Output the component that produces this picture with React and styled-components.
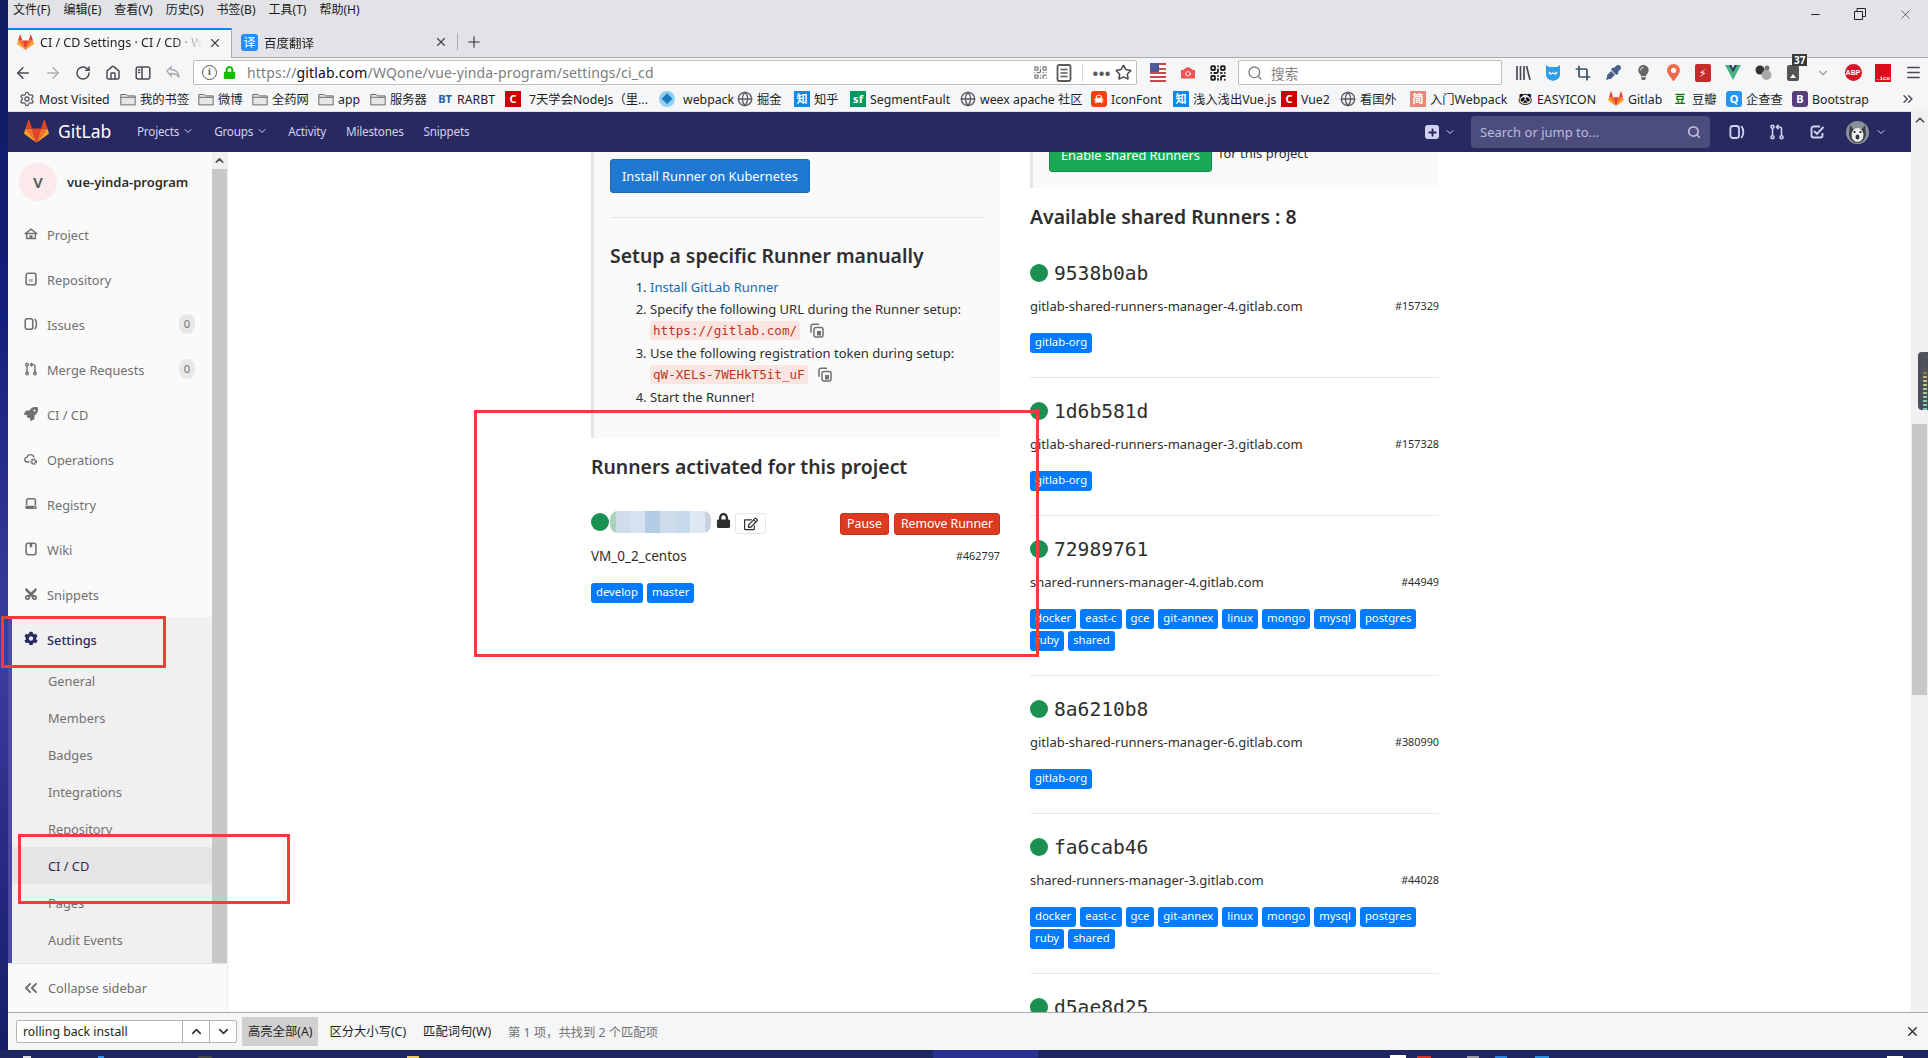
import styled, { createGlobalStyle } from "styled-components";
import {
  ArrowLeft, ArrowRight, RotateCw, Home, Globe, ChevronDown, ChevronUp, ChevronsRight, ChevronsLeft,
  Search, X, Plus, Star, Minus, Menu, Crop, Camera, QrCode, Settings as Gear,
} from "lucide-react";
import { FaCog, FaLock, FaRegEdit, FaRocket, FaCut, FaMapMarkerAlt, FaEyeDropper, FaLightbulb } from "react-icons/fa";

const GlobalStyle = createGlobalStyle`
  html, body { margin: 0; padding: 0; width: 1928px; height: 1058px; overflow: hidden; background: #fff; }
  body { font-family: "Noto Sans", "Noto Sans CJK SC", sans-serif; color: #2e2e2e; font-size: 13px; }
  * { box-sizing: border-box; }
`;

function Tanuki({ size = 24 }) {
  return (
    <svg width={size} height={size} viewBox="0 0 36 36">
      <path fill="#E24329" d="M18 34.1L24.6 13.8H11.4z" />
      <path fill="#FC6D26" d="M18 34.1L11.4 13.8H2.2z" />
      <path fill="#FCA326" d="M2.2 13.8L.2 20c-.2.6 0 1.200.5 1.500L18 34.100z" />
      <path fill="#E24329" d="M2.2 13.8h9.2L7.400 1.500c-.2-.6-1.100-.6-1.300 0z" />
      <path fill="#FC6D26" d="M18 34.1L24.6 13.8h9.200z" />
      <path fill="#FCA326" d="M33.800 13.800L35.800 20c.2.6 0 1.200-.5 1.500L18 34.100z" />
      <path fill="#E24329" d="M33.800 13.800h-9.200l4-12.300c.2-.6 1.100-.6 1.300 0z" />
    </svg>
  );
}

function IssuesIcon({ color = "#707070", size = 16 }) {
  return (
    <svg width={size} height={size} viewBox="0 0 16 16" fill="none" stroke={color} strokeWidth="1.8">
      <rect x="1.400" y="2" width="8.600" height="12" rx="2.400" />
      <path d="M12.600 2.600c2.300 2.600 2.300 8.200 0 10.800" strokeLinecap="round" />
    </svg>
  );
}
function MergeIcon({ color = "#707070", size = 16 }) {
  return (
    <svg width={size} height={size} viewBox="0 0 16 16" fill="none" stroke={color} strokeWidth="1.600">
      <circle cx="3.500" cy="2.800" r="1.500" />
      <circle cx="3.500" cy="13.200" r="1.500" />
      <circle cx="12.500" cy="13.200" r="1.500" />
      <path d="M3.500 4.500v7M12.500 11.500V5c0-1.200-.8-2-2-2H8" />
      <path d="M9.500 .8L7.500 3l2 2.200" />
    </svg>
  );
}
function TodoIcon({ color = "#fff", size = 16 }) {
  return (
    <svg width={size} height={size} viewBox="0 0 16 16" fill="none" stroke={color} strokeWidth="1.900">
      <path d="M13.500 9v2.500a2 2 0 0 1-2 2h-7a2 2 0 0 1-2-2v-7a2 2 0 0 1 2-2H11" />
      <path d="M5.500 7.500L8 10l6-6.500" strokeLinecap="round" />
    </svg>
  );
}
function ProjectIcon() {
  return (
    <svg width="16" height="16" viewBox="0 0 16 16" fill="#707070">
      <path d="M8 1.500L15.500 7v1.200H13.800V14H2.200V8.200H.5V7zM8 3.600L3.800 6.700h8.400zM3.900 8.200v4.200h2.300V9.500h3.600v2.900h2.300V8.200z" />
    </svg>
  );
}
function RepoIcon() {
  return (
    <svg width="16" height="16" viewBox="0 0 16 16" fill="none" stroke="#707070" strokeWidth="1.800">
      <rect x="2.400" y="1.400" width="11.200" height="13.200" rx="2.400" />
      <rect x="5.500" y="8" width="4.500" height="3.500" fill="#b5b5b5" stroke="none" />
    </svg>
  );
}
function OperationsIcon() {
  return (
    <svg width="16" height="16" viewBox="0 0 16 16" fill="none" stroke="#707070" strokeWidth="1.600">
      <path d="M6 11.500H3.600C2 11.500.9 10.300.9 8.800c0-1.400 1-2.500 2.400-2.700C3.800 4.200 5.400 3 7.200 3c2 0 3.600 1.300 4.100 3.100" />
      <circle cx="11" cy="11" r="2.600" strokeWidth="2.400" strokeDasharray="1.600 .6" />
    </svg>
  );
}
function RegistryIcon() {
  return (
    <svg width="16" height="16" viewBox="0 0 16 16" fill="none" stroke="#707070" strokeWidth="1.800">
      <path d="M3 9.500V4a2 2 0 0 1 2-2h6a2 2 0 0 1 2 2v5.500" />
      <rect x="1.500" y="10" width="13" height="3.600" rx="1.400" fill="#707070" stroke="none" />
      <circle cx="11.800" cy="11.800" r=".8" fill="#fff" stroke="none" />
    </svg>
  );
}
function WikiIcon() {
  return (
    <svg width="16" height="16" viewBox="0 0 16 16" fill="none" stroke="#707070" strokeWidth="1.800">
      <rect x="2.400" y="1.400" width="11.200" height="13.200" rx="2.200" />
      <path d="M6.500 1.500h3v5l-1.500-1-1.500 1z" fill="#707070" stroke="none" />
    </svg>
  );
}
function CopyIcon() {
  return (
    <svg width="14" height="15" viewBox="0 0 14 15" fill="none" stroke="#707070" strokeWidth="1.500">
      <path d="M8.500 1.200H3a2 2 0 0 0-2 2v6" strokeLinecap="round" />
      <rect x="4" y="4.500" width="9" height="9.500" rx="2" fill="#fafafa" />
      <rect x="7" y="8" width="4" height="4.500" fill="#707070" stroke="none" />
    </svg>
  );
}
function FolderIcon() {
  return (
    <svg width="16" height="16" viewBox="0 0 16 16" fill="#e6e6e6" stroke="#6d6d6d" strokeWidth="1">
      <path d="M.8 3.500h5.400l1.300 1.400h7.700v9H.8z" />
      <path d="M.8 6.300h14.400" />
    </svg>
  );
}
function SidebarToggleIcon() {
  return (
    <svg width="16" height="16" viewBox="0 0 16 16" fill="none" stroke="#4a4a4f" strokeWidth="1.500">
      <rect x="1.200" y="2" width="13.600" height="12" rx="2" />
      <path d="M7 2v12" />
      <path d="M3 5h2.400M3 7.500h2.400" />
    </svg>
  );
}
function UndoIcon() {
  return (
    <svg width="16" height="16" viewBox="0 0 16 16" fill="none" stroke="#a8a8ac" strokeWidth="1.400">
      <path d="M2 6l4-4v2.500c4 0 8 2.500 8 8-1.500-3-4-4-8-4V11z" />
    </svg>
  );
}
function ReaderIcon() {
  return (
    <svg width="16" height="18" viewBox="0 0 16 18" fill="none" stroke="#5a5a5f" strokeWidth="1.800">
      <rect x="1.500" y="1" width="13" height="16" rx="1.500" />
      <path d="M4.500 5.500h7M4.500 9h7M4.500 12.500h7" strokeWidth="1.300" />
    </svg>
  );
}
function FlagIcon() {
  return (
    <svg width="16" height="19" viewBox="0 0 16 19">
      <rect width="16" height="19" fill="#fff" />
      <path d="M0 0h16v2H0zM0 5h16v2H0zM0 9h16v2H0zM0 13h16v2H0zM0 17h16v2H0z" fill="#c8494d" />
      <rect width="9" height="9" fill="#4e5b94" />
    </svg>
  );
}
function LibraryIcon() {
  return (
    <svg width="16" height="16" viewBox="0 0 16 16" fill="none" stroke="#4a4a4f" strokeWidth="1.700">
      <path d="M2 1v14M5.500 1v14M9 1v14M11.500 1l3.500 14" />
    </svg>
  );
}
function BatIcon() {
  return (
    <svg width="16" height="18" viewBox="0 0 16 18">
      <path d="M1 1l3 2h8l3-2v10c0 3-3 5-7 6-4-1-7-3-7-6z" fill="#2e9fe6" />
      <path d="M4 8l1.500 2L8 9l2.500 1L12 8" stroke="#fff" strokeWidth="1.300" fill="none" />
    </svg>
  );
}
function VueIcon() {
  return (
    <svg width="16" height="15" viewBox="0 0 16 15">
      <path d="M0 0h3.500L8 8l4.500-8H16L8 15z" fill="#41b883" />
      <path d="M3.500 0h3L8 3l1.500-3h3L8 8z" fill="#35495e" />
    </svg>
  );
}
function BallsIcon() {
  return (
    <svg width="17" height="16" viewBox="0 0 17 16">
      <circle cx="5" cy="5" r="4.500" fill="#333" />
      <circle cx="11.500" cy="10" r="5" fill="#aaa" />
      <circle cx="12" cy="3" r="2.500" fill="#777" />
    </svg>
  );
}
function HuskyAvatar() {
  return (
    <svg width="23" height="23" viewBox="0 0 23 23">
      <circle cx="11.500" cy="11.500" r="11.500" fill="#8a9099" />
      <path d="M4 4l3 4h9l3-4 1 10c-1 5-5 8-8.500 8S4 19 3 14z" fill="#3c3f44" />
      <ellipse cx="11.500" cy="14" rx="6" ry="7" fill="#f0f0f0" />
      <circle cx="8.500" cy="11" r="1.100" fill="#111" />
      <circle cx="14.500" cy="11" r="1.100" fill="#111" />
      <ellipse cx="11.500" cy="16" rx="2" ry="2.600" fill="#333" />
    </svg>
  );
}

const App_ = styled.div`
  position: relative;
  width: 1928px;
  height: 1058px;
  overflow: hidden;
  display: flex;
  flex-direction: column;
`;
const Workspace = styled.div`
  flex: 1;
  min-height: 0;
  display: flex;
`;
const DesktopEdge = styled.div`
  width: 8px;
  background: linear-gradient(180deg, #101c5e 0%, #131f7c 30%, #3d3f9c 62%, #2a2a86 80%, #141f66 100%);
`;
const Browser = styled.div`
  flex: 1;
  min-width: 0;
  display: flex;
  flex-direction: column;
`;

const MenuBar = styled.div`
  height: 28px;
  background: #e1e3e6;
  display: flex;
  align-items: flex-start;
  padding: 1px 0 0 5px;
  gap: 13px;
  font-size: 12px;
  line-height: 17px;
  color: #1a1a1a;
`;
const WindowButtons = styled.div`
  margin-left: auto;
  display: flex;
  align-items: center;
  gap: 32px;
  height: 26px;
  padding-right: 15px;
  color: #222;
`;
const TabStrip = styled.div`
  height: 30px;
  background: #e1e3e6;
  border-bottom: 1px solid #a9abae;
  display: flex;
  align-items: stretch;
`;
const Tab = styled.div`
  width: ${(p) => p.$w}px;
  height: ${(p) => (p.$active ? 30 : 29)}px;
  display: flex;
  align-items: center;
  padding: 0 9px 3px;
  gap: 6px;
  font-size: 12.500px;
  color: #222;
  background: ${(p) => (p.$active ? "#f5f6f7" : "transparent")};
  border-top: ${(p) => (p.$active ? "2px solid #0a84ff" : "2px solid transparent")};
  border-right: ${(p) => (p.$active ? "1px solid #a9abae" : "none")};
`;
const TabTitle = styled.span`
  flex: 1;
  min-width: 0;
  white-space: nowrap;
  overflow: hidden;
  -webkit-mask-image: linear-gradient(90deg, #000 82%, transparent 100%);
  mask-image: linear-gradient(90deg, #000 82%, transparent 100%);
`;
const TranslateLogo = styled.span`
  width: 17px;
  height: 17px;
  border-radius: 3px;
  background: #2a8cf6;
  color: #fff;
  font-size: 12px;
  line-height: 17px;
  text-align: center;
  flex: none;
`;
const NewTab = styled.div`
  width: 32px;
  display: flex;
  align-items: center;
  justify-content: center;
  color: #333;
  border-left: 1px solid #a9abae;
  margin: 5px 0 7px;
`;

const Toolbar = styled.div`
  height: 29px;
  background: #f5f6f7;
  display: flex;
  align-items: center;
`;
const ToolButton = styled.div`
  width: 30px;
  height: 24px;
  flex: none;
  display: flex;
  align-items: center;
  justify-content: center;
  position: relative;
`;
const UrlBox = styled.div`
  width: ${(p) => p.$w}px;
  margin: 0 6px 0 5px;
  height: 25px;
  flex: none;
  background: #fff;
  border: 1px solid #bdbdbd;
  border-radius: 2px;
  display: flex;
  align-items: center;
  font-size: 14px;
  letter-spacing: 0.160px;
  color: #7d7d7d;
  padding-left: 8px;
`;
const UrlHost = styled.span`
  color: #0c0c0d;
`;
const UrlText = styled.span`
  margin-left: 11px;
  white-space: nowrap;
`;
const InfoIcon = styled.span`
  width: 15px;
  height: 15px;
  border: 1.500px solid #555;
  border-radius: 50%;
  font: 700 10px/12px "Liberation Serif", serif;
  text-align: center;
  color: #555;
  flex: none;
`;
const UrlTools = styled.div`
  margin-left: auto;
  display: flex;
  align-items: center;
  gap: 8px;
  padding-right: 4px;
  color: #5a5a5f;
`;
const UrlDivider = styled.div`
  width: 1px;
  height: 18px;
  background: #dcdcdc;
  margin: 0 2px;
`;
const MoreDots = styled.span`
  font-size: 15px;
  letter-spacing: 0.500px;
  font-weight: 700;
  line-height: 12px;
  margin-right: -4px;
`;
const SearchPlaceholder = styled.span`
  color: #808080;
  margin-left: 8px;
  font-size: 13.500px;
`;
const CountBadge = styled.span`
  position: absolute;
  top: -7px;
  left: 14px;
  background: #3a3a3a;
  color: #fff;
  font: 700 10px/12px "Noto Sans", sans-serif;
  padding: 0 2px;
`;
const RedSquare = styled.div`
  width: 16px;
  height: 18px;
  background: #df0a1a;
  color: #fff;
  font: 700 6px/6px "Liberation Mono", monospace;
  display: flex;
  align-items: flex-end;
  justify-content: center;
`;
const AbpBadge = styled.div`
  width: 17px;
  height: 17px;
  border-radius: 50%;
  background: #d8142a;
  color: #fff;
  font: 700 7px/17px "Liberation Sans", sans-serif;
  text-align: center;
`;
const WandBox = styled.div`
  width: 16px;
  height: 18px;
  background: #c72a2a;
  border-radius: 2px;
  color: #fff;
  font-size: 11px;
  line-height: 18px;
  text-align: center;
`;

const BookmarkBar = styled.div`
  height: 25px;
  background: #f5f6f7;
  border-bottom: 1px solid #e0e0e2;
  display: flex;
  align-items: center;
  padding-left: 11px;
  gap: 10px;
  font-size: 12.300px;
  color: #1e1e1e;
`;
const Bookmark = styled.div`
  display: flex;
  align-items: center;
  gap: 4px;
  flex: none;
  white-space: nowrap;
`;
const BookmarkLabel = styled.span`
  width: ${(p) => p.$w}px;
  padding-left: ${(p) => p.$pad || 0}px;
  white-space: nowrap;
`;
const Favicon = styled.span`
  width: 16px;
  height: 16px;
  flex: none;
  display: flex;
  align-items: center;
  justify-content: center;
  background: ${(p) => p.$bg || "transparent"};
  color: ${(p) => p.$color || "#fff"};
  font-size: 11px;
  font-weight: 700;
  line-height: 16px;
  border-radius: ${(p) => p.$round || 0}px;
`;

const GitlabNav = styled.nav`
  height: 40px;
  width: 1903px;
  background: #292961;
  display: flex;
  align-items: center;
  padding-left: 16px;
  color: #d1d1f0;
  font-size: 11.700px;
  letter-spacing: -0.200px;
  flex: none;
`;
const Brand = styled.div`
  display: flex;
  align-items: center;
  gap: 9px;
  width: 113px;
  color: #fff;
  font-size: 17.500px;
  letter-spacing: 0;
  padding-bottom: 2px;
`;
const NavLinks = styled.div`
  display: flex;
  align-items: center;
  gap: 20px;
  padding-bottom: 2px;
`;
const NavLink = styled.span`
  display: flex;
  align-items: center;
  gap: 3px;
`;
const NavRight = styled.div`
  margin-left: auto;
  display: flex;
  align-items: center;
  padding-right: 24px;
`;
const PlusBox = styled.span`
  width: 14px;
  height: 14px;
  border-radius: 3px;
  background: #d1d1f0;
  color: #292961;
  display: flex;
  align-items: center;
  justify-content: center;
`;
const NavSearch = styled.div`
  width: 239px;
  height: 32px;
  border-radius: 4px;
  background: #4d4d7d;
  color: #bcbcdc;
  display: flex;
  align-items: center;
  justify-content: space-between;
  padding: 0 9px;
  margin: 0 19px 0 15px;
  font-size: 13px;
  letter-spacing: 0;
`;
const NavIcons = styled.div`
  display: flex;
  align-items: center;
  gap: 24px;
  margin-right: 21px;
`;
const AvatarWrap = styled.div`
  display: flex;
  align-items: center;
  gap: 6px;
`;

const PageRow = styled.div`
  flex: 1;
  min-height: 0;
  display: flex;
`;
const Sidebar = styled.aside`
  width: 220px;
  flex: none;
  display: flex;
  flex-direction: column;
  background: #fafafa;
  border-right: 1px solid #ececec;
`;
const SideScrollArea = styled.div`
  flex: 1;
  min-height: 0;
  display: flex;
`;
const SideNav = styled.div`
  flex: 1;
  min-width: 0;
  display: flex;
  flex-direction: column;
`;
const SideScrollbar = styled.div`
  width: 15px;
  background: #c8c8c8;
  flex: none;
`;
const ScrollArrow = styled.div`
  height: 17px;
  background: #f0f0f0;
  display: flex;
  align-items: center;
  justify-content: center;
  color: #505050;
`;
const ContextHeader = styled.div`
  height: 60px;
  display: flex;
  align-items: center;
  padding: 0 0 0 11px;
  gap: 10px;
  font-size: 13px;
  font-weight: 600;
  color: #2e2e2e;
`;
const ProjectAvatar = styled.div`
  width: 38px;
  height: 38px;
  border-radius: 50%;
  background: #fbe9eb;
  color: #555;
  font-size: 15px;
  font-weight: 600;
  display: flex;
  align-items: center;
  justify-content: center;
`;
const SideItem = styled.div`
  height: 45px;
  display: flex;
  align-items: center;
  padding: 0 17px 0 16px;
  gap: 9px;
  font-size: 12.800px;
  color: #707070;
`;
const ItemIcon = styled.span`
  width: 14px;
  display: flex;
  align-items: center;
  justify-content: center;
  flex: none;
  margin-top: -2px;
  color: #707070;
`;
const CountPill = styled.span`
  margin-left: auto;
  width: 16px;
  height: 20px;
  margin-top: -2px;
  border-radius: 8px;
  background: #e8e8e8;
  color: #707070;
  font-size: 11px;
  line-height: 20px;
  text-align: center;
`;
const SettingsGroup = styled.div`
  flex: 1;
  background: #f0f0f0;
  border-left: 4px solid #4b4ba3;
`;
const SettingsHead = styled.div`
  height: 45px;
  display: flex;
  align-items: center;
  padding-left: 12px;
  gap: 9px;
  font-size: 12.800px;
  font-weight: 500;
  color: #292961;
`;
const SubItem = styled.div`
  height: 37px;
  display: flex;
  align-items: center;
  padding-left: 36px;
  font-size: 12.800px;
  color: ${(p) => (p.$active ? "#292961" : "#707070")};
  background: ${(p) => (p.$active ? "#e5e5e5" : "transparent")};
`;
const CollapseRow = styled.div`
  height: 49px;
  flex: none;
  display: flex;
  align-items: center;
  padding-left: 13px;
  gap: 7px;
  border-top: 1px solid #e5e5e5;
  font-size: 12.800px;
  color: #707070;
`;

const Main = styled.main`
  flex: 1;
  min-width: 0;
  overflow: hidden;
`;
const Columns = styled.div`
  display: grid;
  grid-template-columns: 409px 409px;
  column-gap: 30px;
  padding-left: 363px;
  align-items: start;
`;
const Column = styled.div`
  min-width: 0;
`;
const GrayPanel = styled.div`
  background: #fafafa;
  border-left: 3px solid #e5e5e5;
  padding: ${(p) => p.$pad};
  margin-top: ${(p) => p.$top || 0}px;
`;
const PrimaryButton = styled.div`
  display: inline-block;
  height: 34px;
  padding: 0 11px;
  line-height: 32px;
  background: ${(p) => (p.$green ? "#1aaa55" : "#1f78d1")};
  border: 1px solid ${(p) => (p.$green ? "#168f48" : "#1b69b6")};
  color: #fff;
  border-radius: 3px;
  font-size: 12.800px;
`;
const EnableRow = styled.div`
  display: flex;
  align-items: flex-start;
  gap: 7px;
  font-size: 13px;
`;
const ProjectSuffix = styled.span`
  line-height: 30px;
`;
const Rule = styled.div`
  height: 1px;
  background: #e5e5e5;
  margin-top: 24px;
`;
const Heading = styled.h4`
  margin: ${(p) => p.$m};
  font-size: 19.400px;
  line-height: 28px;
  font-weight: 600;
  color: #2e2e2e;
  white-space: nowrap;
`;
const Steps = styled.ol`
  margin: 6px 0 0;
  padding: 0 0 0 40px;
  font-size: 13px;
  line-height: 22px;
`;
const StepLink = styled.span`
  color: #1b69b6;
`;
const CodeRow = styled.div`
  display: flex;
  align-items: center;
  gap: 10px;
  height: 21px;
  margin-bottom: 1px;
`;
const Code = styled.code`
  background: #fbe5e1;
  color: #c0341d;
  font-family: "DejaVu Sans Mono", monospace;
  font-size: 12.600px;
  line-height: 19px;
  padding: 0 3px;
  border-radius: 3px;
  white-space: nowrap;
`;

const RunnerTitle = styled.div`
  height: 24px;
  display: flex;
  align-items: center;
  gap: ${(p) => p.$gap}px;
  margin-top: ${(p) => p.$top || 0}px;
`;
const StatusDot = styled.span`
  width: 18px;
  height: 18px;
  border-radius: 50%;
  background: #1a9150;
  flex: none;
`;
const BlurredName = styled.span`
  width: 101px;
  height: 22px;
  border-radius: 8px;
  flex: none;
  background: linear-gradient(90deg, #a9d6bb 0 6px, #cfdcec 6px 20px, #d6e2ef 20px 35px, #b3cbe5 35px 50px, #cfdcec 50px 66px, #c9d9ec 66px 80px, #dfe8f3 80px 95px, #c9d2de 95px);
  filter: blur(0.500px);
`;
const LockIcon = styled(FaLock)`
  color: #2e2e2e;
  font-size: 15px;
  margin: -4px 3px 0 4px;
`;
const EditButton = styled.span`
  width: 31px;
  height: 21px;
  margin-top: 3px;
  border: 1px solid #e5e5e5;
  border-radius: 3px;
  background: #fff;
  display: flex;
  align-items: center;
  justify-content: center;
  color: #2e2e2e;
  font-size: 14px;
`;
const RunnerActions = styled.div`
  margin-left: auto;
  display: flex;
  gap: 5px;
  margin-top: 3px;
`;
const DangerButton = styled.span`
  height: 22px;
  padding: 0 6px;
  background: #db3b21;
  border: 1px solid #c9331b;
  border-radius: 3px;
  color: #fff;
  font-size: 12.300px;
  line-height: 19px;
  white-space: nowrap;
`;
const RunnerMeta = styled.div`
  display: flex;
  align-items: center;
  justify-content: space-between;
  height: 22px;
  padding-bottom: 5px;
  margin-top: ${(p) => p.$top}px;
  font-size: ${(p) => p.$size || 13}px;
`;
const RunnerId = styled.small`
  font-size: 10.800px;
`;
const TagList = styled.div`
  display: flex;
  flex-wrap: wrap;
  gap: 2px 4px;
  margin-top: 14px;
`;
const Tag = styled.span`
  height: 20px;
  padding: 0 5px;
  border-radius: 3px;
  background: #007bff;
  color: #fff;
  font-size: 11.300px;
  line-height: 18px;
`;
const Runner = styled.div`
  padding: 21px 0 24px;
  border-bottom: 1px solid #e9e9e9;
`;
const RunnerName = styled.span`
  font-family: "DejaVu Sans Mono", monospace;
  font-size: 19.600px;
  color: #2e2e2e;
`;

const PageScrollbar = styled.div`
  position: absolute;
  top: 111px;
  right: 0;
  width: 17px;
  height: 901px;
  background: #f0f0f0;
`;
const PageThumb = styled.div`
  position: absolute;
  top: 313px;
  left: 1px;
  width: 15px;
  height: 271px;
  background: #c8c8c8;
`;
const MeterWidget = styled.div`
  position: absolute;
  top: 352px;
  right: 0;
  width: 10px;
  height: 58px;
  border-radius: 4px 0 0 4px;
  background: repeating-linear-gradient(180deg, transparent 0 2px, #4a505e 2px 4px),
    linear-gradient(180deg, #555 0 30%, #d8c56a 45%, #6fd0c0 100%);
  background-size: 4px 100%, 4px 100%;
  background-position: 5px 0, 5px 0;
  background-repeat: no-repeat;
  background-color: #4a505e;
`;
const Annotation = styled.div`
  position: absolute;
  left: ${(p) => p.$x}px;
  top: ${(p) => p.$y}px;
  width: ${(p) => p.$w}px;
  height: ${(p) => p.$h}px;
  border: 3px solid #f43a3a;
  pointer-events: none;
`;

const FindBar = styled.div`
  height: 38px;
  flex: none;
  background: #f5f6f7;
  border-top: 1px solid #a9abae;
  display: flex;
  align-items: center;
  padding-left: 8px;
  font-size: 12.300px;
  color: #1e1e1e;
`;
const FindInput = styled.div`
  width: 221px;
  height: 23px;
  background: #fff;
  border: 1px solid #b5b5b5;
  border-radius: 2px;
  display: flex;
  align-items: center;
  padding-left: 6px;
`;
const FindText = styled.span`
  flex: 1;
`;
const FindArrow = styled.span`
  width: 27px;
  height: 100%;
  border-left: 1px solid #b5b5b5;
  display: flex;
  align-items: center;
  justify-content: center;
  color: #333;
`;
const FindOption = styled.span`
  margin-left: ${(p) => p.$ml}px;
  padding: 0 6px;
  height: 29px;
  line-height: 29px;
  background: ${(p) => (p.$on ? "#d0d0d0" : "transparent")};
  white-space: nowrap;
`;
const FindStatus = styled.span`
  margin-left: 11px;
  color: #737373;
`;
const FindClose = styled.span`
  margin-left: auto;
  padding-right: 8px;
  display: flex;
  color: #222;
`;
const Taskbar = styled.div`
  height: 8px;
  flex: none;
  background: #1f2560;
  display: flex;
  align-items: flex-end;
`;
const TaskMark = styled.span`
  margin-left: ${(p) => p.$ml}px;
  width: ${(p) => p.$w}px;
  height: ${(p) => p.$h}px;
  background: ${(p) => p.$c};
`;

const menus = ["文件(F)", "编辑(E)", "查看(V)", "历史(S)", "书签(B)", "工具(T)", "帮助(H)"];

const bookmarks = [
  { icon: <Gear size={16} color="#5a5a5f" />, label: "Most Visited", w: 71 },
  { icon: <FolderIcon />, label: "我的书签", w: 48 },
  { icon: <FolderIcon />, label: "微博", w: 24 },
  { icon: <FolderIcon />, label: "全药网", w: 36 },
  { icon: <FolderIcon />, label: "app", w: 22 },
  { icon: <FolderIcon />, label: "服务器", w: 37 },
  { icon: <Favicon $color="#1f5fa8">BT</Favicon>, label: "RARBT", w: 38 },
  { icon: <Favicon $bg="#c00">C</Favicon>, label: "7天学会NodeJs（里...", w: 124, pad: 4 },
  { icon: <Favicon $bg="#8ed1f0" $round={8} $color="#1c78c0">◆</Favicon>, label: "webpack", w: 48, pad: 4 },
  { icon: <Globe size={16} color="#5a5a5f" />, label: "掘金", w: 27 },
  { icon: <Favicon $bg="#0f88eb">知</Favicon>, label: "知乎", w: 26 },
  { icon: <Favicon $bg="#009a61">sf</Favicon>, label: "SegmentFault", w: 80 },
  { icon: <Globe size={16} color="#5a5a5f" />, label: "weex apache 社区", w: 101 },
  { icon: <Favicon $bg="#f5400f" $round={3}>☠</Favicon>, label: "IconFont", w: 52 },
  { icon: <Favicon $bg="#0f88eb">知</Favicon>, label: "浅入浅出Vue.js", w: 78 },
  { icon: <Favicon $bg="#c00">C</Favicon>, label: "Vue2", w: 29 },
  { icon: <Globe size={16} color="#5a5a5f" />, label: "看国外", w: 40 },
  { icon: <Favicon $bg="#e58a78">简</Favicon>, label: "入门Webpack", w: 77 },
  { icon: <Favicon $color="#111">🐼︎</Favicon>, label: "EASYICON", w: 61 },
  { icon: <Tanuki size={16} />, label: "Gitlab", w: 34 },
  { icon: <Favicon $bg="#fff" $color="#0a7a14">豆</Favicon>, label: "豆瓣", w: 24 },
  { icon: <Favicon $bg="#2196f3" $round={3}>Q</Favicon>, label: "企查查", w: 36 },
  { icon: <Favicon $bg="#563d7c" $round={3}>B</Favicon>, label: "Bootstrap", w: 56 },
];

const sideItems = [
  { label: "Project", icon: <ProjectIcon /> },
  { label: "Repository", icon: <RepoIcon /> },
  { label: "Issues", icon: <IssuesIcon />, count: 0 },
  { label: "Merge Requests", icon: <MergeIcon />, count: 0 },
  { label: "CI / CD", icon: <FaRocket size={14} /> },
  { label: "Operations", icon: <OperationsIcon /> },
  { label: "Registry", icon: <RegistryIcon /> },
  { label: "Wiki", icon: <WikiIcon /> },
  { label: "Snippets", icon: <FaCut size={14} style={{ transform: "rotate(-90deg)" }} /> },
];

const subItems = ["General", "Members", "Badges", "Integrations", "Repository", "CI / CD", "Pages", "Audit Events"];

const manyTags = ["docker", "east-c", "gce", "git-annex", "linux", "mongo", "mysql", "postgres", "ruby", "shared"];

const runners = [
  { name: "9538b0ab", host: "gitlab-shared-runners-manager-4.gitlab.com", id: "#157329", tags: ["gitlab-org"] },
  { name: "1d6b581d", host: "gitlab-shared-runners-manager-3.gitlab.com", id: "#157328", tags: ["gitlab-org"] },
  { name: "72989761", host: "shared-runners-manager-4.gitlab.com", id: "#44949", tags: manyTags },
  { name: "8a6210b8", host: "gitlab-shared-runners-manager-6.gitlab.com", id: "#380990", tags: ["gitlab-org"] },
  { name: "fa6cab46", host: "shared-runners-manager-3.gitlab.com", id: "#44028", tags: manyTags },
  { name: "d5ae8d25", host: "shared-runners-manager-2.gitlab.com", id: "#44028", tags: manyTags },
];

// tips of the desktop taskbar icons, x is where each one starts
const taskMarks = [
  { x: 23, w: 8, h: 2, c: "#dddddd" },
  { x: 98, w: 6, h: 2, c: "#2a8ff0" },
  { x: 198, w: 14, h: 2, c: "#444444" },
  { x: 407, w: 12, h: 2, c: "#e8c860" },
  { x: 933, w: 105, h: 8, c: "#2a2f92" },
  { x: 1390, w: 16, h: 3, c: "#ffffff" },
  { x: 1417, w: 14, h: 2, c: "#d8352a" },
  { x: 1467, w: 12, h: 2, c: "#9999aa" },
  { x: 1495, w: 12, h: 2, c: "#2a7fe0" },
  { x: 1535, w: 14, h: 2, c: "#2a8fe0" },
  { x: 1887, w: 16, h: 2, c: "#ffffff" },
];

export default function App() {
  return (
    <App_>
      <GlobalStyle />
      <Workspace>
        <DesktopEdge />
        <Browser>
          <MenuBar>
            {menus.map((m) => <span key={m}>{m}</span>)}
            <WindowButtons>
              <Minus size={13} />
              <svg width="12" height="12" viewBox="0 0 12 12" fill="none" stroke="#222"><path d="M.5 3.500h8v8h-8zM3 3.500V.5h8.500v8H8.500" /></svg>
              <X size={15} strokeWidth={1} />
            </WindowButtons>
          </MenuBar>
          <TabStrip>
            <Tab $w={224} $active>
              <Tanuki size={17} />
              <TabTitle>CI / CD Settings · CI / CD · WQone / vue-yinda-program</TabTitle>
              <X size={14} color="#444" />
            </Tab>
            <Tab $w={225}>
              <TranslateLogo>译</TranslateLogo>
              <TabTitle>百度翻译</TabTitle>
              <X size={14} color="#444" />
            </Tab>
            <NewTab><Plus size={18} strokeWidth={1.500} /></NewTab>
          </TabStrip>
          <Toolbar>
            <ToolButton><ArrowLeft size={18} color="#4a4a4f" /></ToolButton>
            <ToolButton><ArrowRight size={18} color="#b1b1b3" /></ToolButton>
            <ToolButton><RotateCw size={16} color="#4a4a4f" strokeWidth={2.200} /></ToolButton>
            <ToolButton><Home size={16} color="#4a4a4f" strokeWidth={2.200} /></ToolButton>
            <ToolButton><SidebarToggleIcon /></ToolButton>
            <ToolButton><UndoIcon /></ToolButton>
            <UrlBox $w={944}>
              <InfoIcon>i</InfoIcon>
              <FaLock size={13} color="#12bc00" style={{ marginLeft: 6 }} />
              <UrlText>https://<UrlHost>gitlab.com</UrlHost>/WQone/vue-yinda-program/settings/ci_cd</UrlText>
              <UrlTools>
                <QrCode size={15} color="#777" />
                <ReaderIcon />
                <UrlDivider />
                <MoreDots>•••</MoreDots>
                <Star size={17} color="#4a4a4f" strokeWidth={2.200} />
              </UrlTools>
            </UrlBox>
            <ToolButton><FlagIcon /></ToolButton>
            <ToolButton><Camera size={18} color="#ef5350" fill="#ef5350" stroke="#fff" strokeWidth={1.200} /></ToolButton>
            <ToolButton><QrCode size={18} color="#222" strokeWidth={2.400} /></ToolButton>
            <UrlBox $w={264}>
              <Search size={16} color="#7d7d7d" />
              <SearchPlaceholder>搜索</SearchPlaceholder>
            </UrlBox>
            <ToolButton><LibraryIcon /></ToolButton>
            <ToolButton><BatIcon /></ToolButton>
            <ToolButton><Crop size={16} color="#3d5166" strokeWidth={2.600} /></ToolButton>
            <ToolButton><FaEyeDropper size={15} color="#4a5e8c" /></ToolButton>
            <ToolButton><FaLightbulb size={15} color="#666" /></ToolButton>
            <ToolButton><FaMapMarkerAlt size={17} color="#ee6a4b" /></ToolButton>
            <ToolButton><WandBox>⚡︎</WandBox></ToolButton>
            <ToolButton><VueIcon /></ToolButton>
            <ToolButton><BallsIcon /></ToolButton>
            <ToolButton>
              <svg width="12" height="16" viewBox="0 0 12 16"><rect width="12" height="16" rx="2" fill="#555" /><path d="M3 13l3-4 3 4z" fill="#fff" /></svg>
              <CountBadge>37</CountBadge>
            </ToolButton>
            <ToolButton><ChevronDown size={14} color="#999" /></ToolButton>
            <ToolButton><AbpBadge>ABP</AbpBadge></ToolButton>
            <ToolButton><RedSquare>.ico</RedSquare></ToolButton>
            <ToolButton><Menu size={17} color="#4a4a4f" strokeWidth={2.200} /></ToolButton>
          </Toolbar>
          <BookmarkBar>
            {bookmarks.map((b) => (
              <Bookmark key={b.label}>
                {b.icon}
                <BookmarkLabel $w={b.w} $pad={b.pad}>{b.label}</BookmarkLabel>
              </Bookmark>
            ))}
            <ChevronsRight size={16} color="#4a4a4f" style={{ marginLeft: 22 }} />
          </BookmarkBar>
          <PageColumn />
          <FindBar>
            <FindInput>
              <FindText>rolling back install</FindText>
              <FindArrow><ChevronUp size={15} strokeWidth={2.600} /></FindArrow>
              <FindArrow><ChevronDown size={15} strokeWidth={2.600} /></FindArrow>
            </FindInput>
            <FindOption $ml={5} $on>高亮全部(A)</FindOption>
            <FindOption $ml={5}>区分大小写(C)</FindOption>
            <FindOption $ml={5}>匹配词句(W)</FindOption>
            <FindStatus>第 1 项，共找到 2 个匹配项</FindStatus>
            <FindClose><X size={15} strokeWidth={2} /></FindClose>
          </FindBar>
        </Browser>
      </Workspace>
      <Taskbar>
        {taskMarks.map((m, i) => (
          <TaskMark
            key={m.x}
            $ml={m.x - (i ? taskMarks[i - 1].x + taskMarks[i - 1].w : 0)}
            $w={m.w}
            $h={m.h}
            $c={m.c}
          />
        ))}
      </Taskbar>
      <PageScrollbar>
        <ScrollArrow><ChevronUp size={14} strokeWidth={3} /></ScrollArrow>
        <PageThumb />
      </PageScrollbar>
      <MeterWidget />
      <Annotation $x={1} $y={616} $w={165} $h={52} />
      <Annotation $x={18} $y={834} $w={272} $h={70} />
      <Annotation $x={474} $y={410} $w={565} $h={247} />
    </App_>
  );
}

function PageColumn() {
  return (
    <>
      <GitlabNav>
        <Brand><Tanuki size={25} />GitLab</Brand>
        <NavLinks>
          <NavLink>Projects <ChevronDown size={12} /></NavLink>
          <NavLink>Groups <ChevronDown size={12} /></NavLink>
          <NavLink>Activity</NavLink>
          <NavLink>Milestones</NavLink>
          <NavLink>Snippets</NavLink>
        </NavLinks>
        <NavRight>
          <PlusBox><Plus size={11} strokeWidth={4} /></PlusBox>
          <ChevronDown size={12} style={{ marginLeft: 5 }} />
          <NavSearch>Search or jump to...<Search size={14} strokeWidth={3} color="#bcbcdc" /></NavSearch>
          <NavIcons>
            <IssuesIcon color="#d1d1f0" />
            <MergeIcon color="#d1d1f0" />
            <TodoIcon color="#d1d1f0" />
          </NavIcons>
          <AvatarWrap><HuskyAvatar /><ChevronDown size={12} /></AvatarWrap>
        </NavRight>
      </GitlabNav>
      <PageRow>
        <Sidebar>
          <SideScrollArea>
            <SideNav>
              <ContextHeader>
                <ProjectAvatar>V</ProjectAvatar>
                vue-yinda-program
              </ContextHeader>
              {sideItems.map((i) => (
                <SideItem key={i.label}>
                  <ItemIcon>{i.icon}</ItemIcon>
                  {i.label}
                  {i.count !== undefined && <CountPill>{i.count}</CountPill>}
                </SideItem>
              ))}
              <SettingsGroup>
                <SettingsHead>
                  <ItemIcon><FaCog size={15} color="#292961" /></ItemIcon>
                  Settings
                </SettingsHead>
                {subItems.map((s) => (
                  <SubItem key={s} $active={s === "CI / CD"}>{s}</SubItem>
                ))}
              </SettingsGroup>
            </SideNav>
            <SideScrollbar>
              <ScrollArrow><ChevronUp size={13} strokeWidth={3} /></ScrollArrow>
            </SideScrollbar>
          </SideScrollArea>
          <CollapseRow>
            <ChevronsLeft size={20} color="#707070" strokeWidth={2.400} />
            Collapse sidebar
          </CollapseRow>
        </Sidebar>
        <Main>
          <Columns>
            <Column>
              <GrayPanel $pad="7px 16px 30px 16px">
                <PrimaryButton>Install Runner on Kubernetes</PrimaryButton>
                <Rule />
                <Heading $m="24px 0 0">Setup a specific Runner manually</Heading>
                <Steps>
                  <li><StepLink>Install GitLab Runner</StepLink></li>
                  <li>
                    Specify the following URL during the Runner setup:
                    <CodeRow><Code>https://gitlab.com/</Code><CopyIcon /></CodeRow>
                  </li>
                  <li>
                    Use the following registration token during setup:
                    <CodeRow><Code>qW-XELs-7WEHkT5it_uF</Code><CopyIcon /></CodeRow>
                  </li>
                  <li>Start the Runner!</li>
                </Steps>
              </GrayPanel>
              <Heading $m="15px 0 0">Runners activated for this project</Heading>
              <RunnerTitle $gap={1} $top={29}>
                <StatusDot />
                <BlurredName />
                <LockIcon />
                <EditButton><FaRegEdit /></EditButton>
                <RunnerActions>
                  <DangerButton>Pause</DangerButton>
                  <DangerButton>Remove Runner</DangerButton>
                </RunnerActions>
              </RunnerTitle>
              <RunnerMeta $top={13} $size={13.500}>
                <span>VM_0_2_centos</span>
                <RunnerId>#462797</RunnerId>
              </RunnerMeta>
              <TagList>
                <Tag>develop</Tag>
                <Tag>master</Tag>
              </TagList>
            </Column>
            <Column>
              <GrayPanel $pad="0 16px 16px 16px" $top={-14}>
                <EnableRow>
                  <PrimaryButton $green>Enable shared Runners</PrimaryButton>
                  <ProjectSuffix>for this project</ProjectSuffix>
                </EnableRow>
              </GrayPanel>
              <Heading $m="15px 0 9px">Available shared Runners : 8</Heading>
              {runners.map((r) => (
                <Runner key={r.name}>
                  <RunnerTitle $gap={6}>
                    <StatusDot />
                    <RunnerName>{r.name}</RunnerName>
                  </RunnerTitle>
                  <RunnerMeta $top={12}>
                    <span>{r.host}</span>
                    <RunnerId>{r.id}</RunnerId>
                  </RunnerMeta>
                  <TagList>
                    {r.tags.map((t) => <Tag key={t}>{t}</Tag>)}
                  </TagList>
                </Runner>
              ))}
            </Column>
          </Columns>
        </Main>
      </PageRow>
    </>
  );
}
